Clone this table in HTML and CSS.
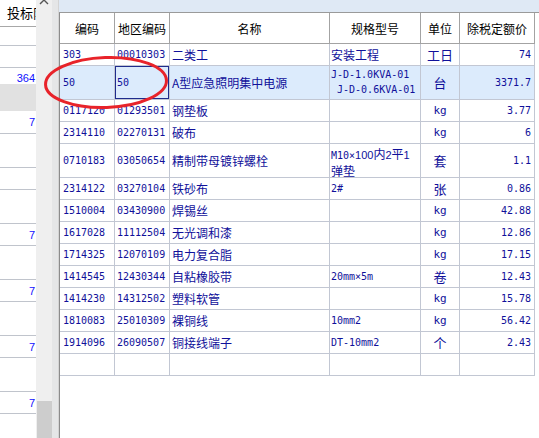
FILE: index.html
```html
<!DOCTYPE html>
<html lang="zh-CN">
<head>
<meta charset="utf-8">
<title>材料表</title>
<link rel="stylesheet" href="styles.css">
</head>
<body>
<div class="app">
  <div class="left">
    <div class="lh">投标限价</div>
    <div class="lr h18"></div>
    <div class="lr h21"></div>
    <div class="lr h16 nb">364</div>
    <div class="lband"></div>
    <div class="lr h22">7</div>
    <div class="lr h33"></div>
    <div class="lr h21"></div>
    <div class="lr h33"></div>
    <div class="lr h21">7</div>
    <div class="lr h33"></div>
    <div class="lr h21">7</div>
    <div class="lr h33"></div>
    <div class="lr h21">7</div>
    <div class="lr h33"></div>
    <div class="lr h21">7</div>
  </div>
  <div class="scroll">
    <svg class="up" width="12" height="6" viewBox="0 0 12 6"><polyline points="1,5 5,1 9,5" fill="none" stroke="#555" stroke-width="1.4"/></svg>
    <div class="thumb"></div>
  </div>
  <div class="main">
    <div class="strip"></div>
    <div class="panel">
      <div class="grid">
        <div class="hd">编码</div><div class="hd">地区编码</div><div class="hd">名称</div><div class="hd">规格型号</div><div class="hd">单位</div><div class="hd">除税定额价</div>

        <div class="cd">303</div><div class="cd">00010303</div><div class="nm">二类工</div><div class="sp"><span class="c">安装工程</span></div><div class="un c">工日</div><div class="pr">74</div>

        <div class="cd sel">50</div><div class="cd sel focus">50</div><div class="nm sel">A型应急照明集中电源</div><div class="sp sel two">J-D-1.0KVA-01<br>&nbsp;J-D-0.6KVA-01</div><div class="un c sel">台</div><div class="pr sel">3371.7</div>

        <div class="cd">0117120</div><div class="cd">01293501</div><div class="nm">钢垫板</div><div class="sp"></div><div class="un">kg</div><div class="pr">3.77</div>

        <div class="cd">2314110</div><div class="cd">02270131</div><div class="nm">破布</div><div class="sp"></div><div class="un">kg</div><div class="pr">6</div>

        <div class="cd">0710183</div><div class="cd">03050654</div><div class="nm">精制带母镀锌螺栓</div><div class="sp two">M10×<span class="s">100<span class="c">内</span>2<span class="c">平</span>1</span><br><span class="c">弹垫</span></div><div class="un c">套</div><div class="pr">1.1</div>

        <div class="cd">2314122</div><div class="cd">03270104</div><div class="nm">铁砂布</div><div class="sp">2#</div><div class="un c">张</div><div class="pr">0.86</div>

        <div class="cd">1510004</div><div class="cd">03430900</div><div class="nm">焊锡丝</div><div class="sp"></div><div class="un">kg</div><div class="pr">42.88</div>

        <div class="cd">1617028</div><div class="cd">11112504</div><div class="nm">无光调和漆</div><div class="sp"></div><div class="un">kg</div><div class="pr">12.86</div>

        <div class="cd">1714325</div><div class="cd">12070109</div><div class="nm">电力复合脂</div><div class="sp"></div><div class="un">kg</div><div class="pr">17.15</div>

        <div class="cd">1414545</div><div class="cd">12430344</div><div class="nm">自粘橡胶带</div><div class="sp">20mm×5m</div><div class="un c">卷</div><div class="pr">12.43</div>

        <div class="cd">1414230</div><div class="cd">14312502</div><div class="nm">塑料软管</div><div class="sp"></div><div class="un">kg</div><div class="pr">15.78</div>

        <div class="cd">1810083</div><div class="cd">25010309</div><div class="nm">裸铜线</div><div class="sp">10mm2</div><div class="un">kg</div><div class="pr">56.42</div>

        <div class="cd">1914096</div><div class="cd">26090507</div><div class="nm">铜接线端子</div><div class="sp">DT-10mm2</div><div class="un c">个</div><div class="pr">2.43</div>

        <div class="cd"></div><div class="cd"></div><div class="nm"></div><div class="sp"></div><div class="un"></div><div class="pr"></div>
      </div>
    </div>
  </div>
  <svg class="ring" width="130" height="58" viewBox="0 0 130 58"><ellipse cx="63" cy="27.5" rx="60.5" ry="25" transform="rotate(-2 63 27.5)" fill="none" stroke="#e8232a" stroke-width="3"/></svg>
</div>
</body>
</html>
```
FILE: styles.css
```css
html, body {
  margin: 0;
  padding: 0;
  background: #ffffff;
}
.app {
  position: relative;
  display: flex;
  width: 539px;
  height: 438px;
  overflow: hidden;
  font-family: "Noto Sans CJK SC", sans-serif;
}
.left {
  width: 36px;
  flex: none;
  overflow: hidden;
  background: #ffffff;
}
.lh {
  height: 26px;
  border-bottom: 1px solid #a8a8a8;
  font-size: 13px;
  line-height: 26px;
  padding-left: 7px;
  white-space: nowrap;
  color: #000;
}
.lr {
  border-bottom: 1px solid #c0c4cc;
  text-align: right;
  padding-right: 1px;
  font-family: "Liberation Sans", sans-serif;
  font-size: 11px;
  color: #1010ff;
  display: flex;
  align-items: center;
  justify-content: flex-end;
  box-sizing: content-box;
}
.lr.nb {
  border-bottom: none;
  align-items: flex-end;
}
.h16 { height: 16px; }
.h18 { height: 18px; }
.h21 { height: 21px; }
.h22 { height: 22px; }
.h33 { height: 33px; }
.lband {
  height: 27px;
  background: #e1e1e1;
}
.scroll {
  width: 23px;
  flex: none;
  display: flex;
  flex-direction: column;
  background: linear-gradient(to right, #efefef 0, #efefef 16px, #e5e6e7 16px, #e5e6e7 22px, #d4d4d4 22px);
}
.up {
  display: block;
  margin-left: 3px;
  margin-top: -1px;
}
.thumb {
  margin-top: auto;
  margin-left: 1px;
  width: 15px;
  height: 37px;
  background: #cdcdcd;
}
.main {
  flex: 1;
  display: flex;
  flex-direction: column;
}
.strip {
  height: 12px;
  background: #dfe9f5;
}
.panel {
  flex: 1;
  border-left: 1px solid #8c8c8c;
  border-top: 1px solid #9a9a9a;
  background: #ffffff;
}
.grid {
  display: grid;
  grid-template-columns: 55px 55px 160px 91px 39px 75px;
  grid-template-rows: 31px 22px 34px 22px 22px 34px repeat(9, 22px);
}
.grid > div {
  box-sizing: border-box;
  border-right: 1px solid #c2c7d3;
  border-bottom: 1px solid #c2c7d3;
  display: flex;
  align-items: center;
  overflow: hidden;
  white-space: nowrap;
  color: #10109a;
}
.grid > .hd {
  border-color: #a3a3a3;
  justify-content: center;
  color: #000;
  font-size: 12px;
}
.cd, .sp, .pr, .un {
  font-family: "DejaVu Sans Mono", "Noto Sans CJK SC", monospace;
  font-size: 10px;
}
.cd {
  padding-left: 2px;
}
.grid > .cd:nth-child(6n+1) {
  padding-left: 3px;
}
.nm {
  font-size: 12px;
  padding-left: 2px;
}
.sp {
  padding-left: 1px;
}
.grid > .two {
  display: block;
  line-height: 15px;
  padding-top: 2px;
}
.grid > .sel.two {
  padding-top: 1px;
}
.un {
  justify-content: center;
  font-size: 11px;
}
.pr {
  justify-content: flex-end;
  padding-right: 3px;
}
.c {
  font-family: "Noto Sans CJK SC", sans-serif;
  font-size: 12px;
}
.s {
  font-family: "Liberation Sans", "Noto Sans CJK SC", sans-serif;
  font-size: 11px;
}
.grid > .un.c {
  font-size: 13px;
}
.grid > .sel {
  background: #dcebfc;
}
.grid > .focus {
  box-shadow: inset 0 0 0 1px #1f2c8c;
}
.ring {
  position: absolute;
  left: 43px;
  top: 55px;
}
```
